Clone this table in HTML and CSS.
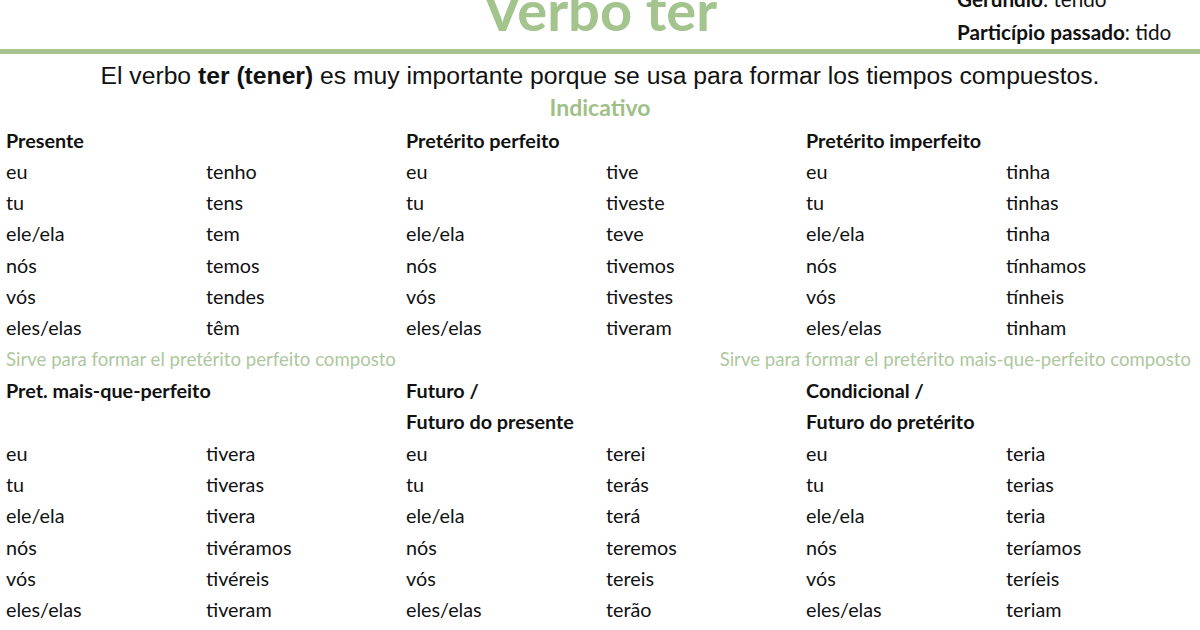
FILE: index.html
```html
<!DOCTYPE html>
<html lang="pt">
<head>
<meta charset="utf-8">
<title>Verbo ter</title>
<link rel="stylesheet" href="styles.css">
</head>
<body>
<header class="top">
  <div class="top-side"></div>
  <h1 class="title">Verbo ter</h1>
  <div class="top-side forms">
    <p class="form-line"><b>Gerundio</b>: tendo</p>
    <p class="form-line"><b>Particípio passado</b>: tido</p>
  </div>
</header>
<p class="intro">El verbo <b>ter (tener)</b> es muy importante porque se usa para formar los tiempos compuestos.</p>
<h2 class="mood">Indicativo</h2>
<main class="grid">
  <div class="tense">Presente</div>
  <div class="tense">Pretérito perfeito</div>
  <div class="tense">Pretérito imperfeito</div>

  <div>eu</div><div>tenho</div><div>eu</div><div>tive</div><div>eu</div><div>tinha</div>
  <div>tu</div><div>tens</div><div>tu</div><div>tiveste</div><div>tu</div><div>tinhas</div>
  <div>ele/ela</div><div>tem</div><div>ele/ela</div><div>teve</div><div>ele/ela</div><div>tinha</div>
  <div>nós</div><div>temos</div><div>nós</div><div>tivemos</div><div>nós</div><div>tínhamos</div>
  <div>vós</div><div>tendes</div><div>vós</div><div>tivestes</div><div>vós</div><div>tínheis</div>
  <div>eles/elas</div><div>têm</div><div>eles/elas</div><div>tiveram</div><div>eles/elas</div><div>tinham</div>

  <div class="note note-left">Sirve para formar el pretérito perfeito composto</div>
  <div class="note note-right">Sirve para formar el pretérito mais-que-perfeito composto</div>

  <div class="tense">Pret. mais-que-perfeito</div>
  <div class="tense">Futuro /</div>
  <div class="tense">Condicional /</div>
  <div class="tense"></div>
  <div class="tense">Futuro do presente</div>
  <div class="tense">Futuro do pretérito</div>

  <div>eu</div><div>tivera</div><div>eu</div><div>terei</div><div>eu</div><div>teria</div>
  <div>tu</div><div>tiveras</div><div>tu</div><div>terás</div><div>tu</div><div>terias</div>
  <div>ele/ela</div><div>tivera</div><div>ele/ela</div><div>terá</div><div>ele/ela</div><div>teria</div>
  <div>nós</div><div>tivéramos</div><div>nós</div><div>teremos</div><div>nós</div><div>teríamos</div>
  <div>vós</div><div>tivéreis</div><div>vós</div><div>tereis</div><div>vós</div><div>teríeis</div>
  <div>eles/elas</div><div>tiveram</div><div>eles/elas</div><div>terão</div><div>eles/elas</div><div>teriam</div>
</main>
</body>
</html>
```

FILE: styles.css
```css
html, body {
  margin: 0;
  padding: 0;
  background: #ffffff;
  overflow: hidden;
}
body {
  width: 1200px;
  height: 630px;
  font-family: Lato, "Open Sans", sans-serif;
  color: #111111;
}
.top {
  display: grid;
  grid-template-columns: 1fr auto 1fr;
  height: 49px;
  border-bottom: 5px solid #a5c490;
}
.title {
  margin: -15px 0 0 0;
  font-size: 56px;
  line-height: 49px;
  font-weight: 700;
  color: #a4c48e;
  white-space: nowrap;
}
.forms {
  padding-left: 240px;
  margin-top: -17px;
}
.form-line {
  margin: 0;
  font-size: 20.7px;
  line-height: 33px;
  white-space: nowrap;
}
.form-line b {
  font-weight: 700;
}
.intro {
  margin: 6px 0 0 0;
  font-family: "Liberation Sans", Arial, sans-serif;
  font-size: 24.7px;
  line-height: 32px;
  text-align: center;
}
.mood {
  margin: 0;
  font-size: 23px;
  line-height: 30px;
  font-weight: 700;
  color: #9fbf89;
  text-align: center;
}
.grid {
  display: grid;
  grid-template-columns: repeat(5, 200px) 1fr;
  grid-auto-rows: 31.33px;
  margin-top: 2.5px;
  padding-left: 6px;
  font-size: 19.8px;
  line-height: 31.33px;
  white-space: nowrap;
}
.tense {
  grid-column: span 2;
  font-weight: 700;
}
.note {
  grid-column: span 3;
  font-size: 18.6px;
  color: #adc79d;
}
.note-right {
  text-align: right;
  padding-right: 9px;
}
```
